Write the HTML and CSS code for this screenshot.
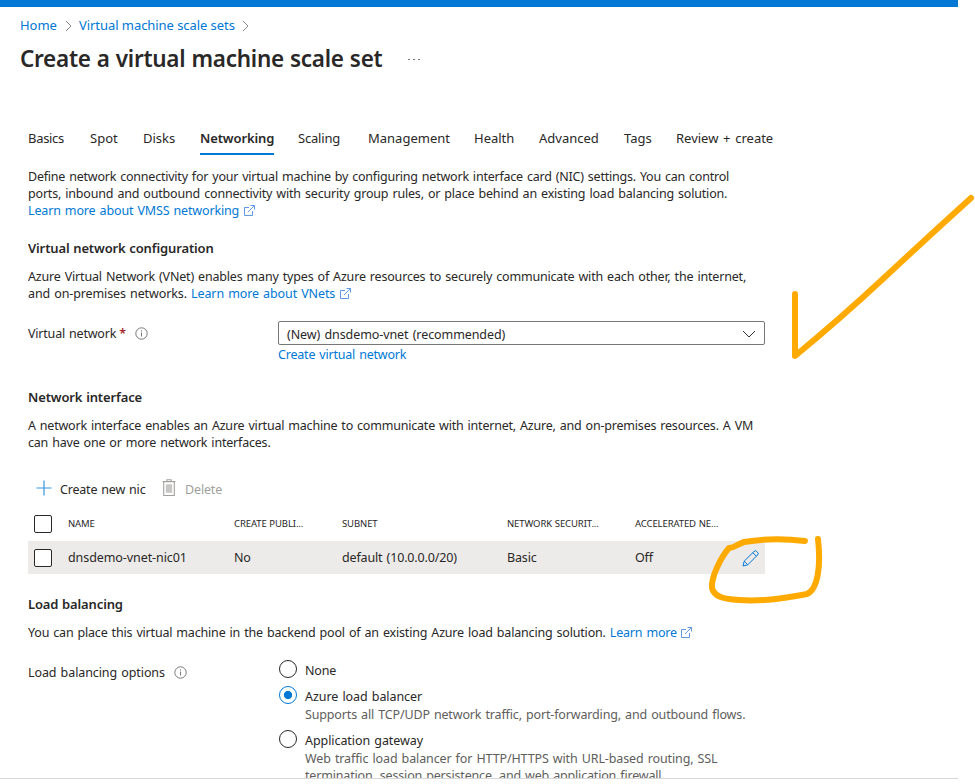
FILE: index.html
```
<!DOCTYPE html>
<html lang="en">
<head>
<meta charset="utf-8">
<title>Create a virtual machine scale set</title>
<link rel="stylesheet" href="styles.css">
</head>
<body>
<svg class="defs" width="0" height="0" aria-hidden="true">
  <symbol id="ext" viewBox="0 0 11 11"><path d="M5 2.500H.500v8h8V6M6.500.500H10.500V4.500M10.300.700 4 7"/></symbol>
  <symbol id="info" viewBox="0 0 13 13"><circle cx="6.500" cy="6.500" r="5.700"/><path d="M6.500 5.500V9.500M6.500 3.300V4.500"/></symbol>
  <symbol id="chev" viewBox="0 0 7 12"><path d="M1 1 6 6 1 11"/></symbol>
</svg>
<div class="page">
  <div class="topbar"></div>
  <nav class="crumbs">
    <a class="c1">Home</a><svg class="chev"><use href="#chev"/></svg><a class="c2">Virtual machine scale sets</a><svg class="chev"><use href="#chev"/></svg>
  </nav>
  <header class="title"><h1>Create a virtual machine scale set</h1><span class="dots"><i></i><i></i><i></i></span></header>
  <nav class="tabs">
    <a class="t1">Basics</a><a class="t2">Spot</a><a class="t3">Disks</a><a class="t4 active">Networking</a><a class="t5">Scaling</a><a class="t6">Management</a><a class="t7">Health</a><a class="t8">Advanced</a><a class="t9">Tags</a><a class="t10">Review + create</a>
  </nav>
  <main>
    <div class="para">
      <div class="l1">Define network connectivity for your virtual machine by configuring network interface card (NIC) settings. You can control</div>
      <div class="l2">ports, inbound and outbound connectivity with security group rules, or place behind an existing load balancing solution.</div>
      <div class="l3"><a>Learn more about VMSS networking</a><svg class="ext"><use href="#ext"/></svg></div>
    </div>
    <h2 class="h-vnet">Virtual network configuration</h2>
    <div class="para">
      <div class="l4">Azure Virtual Network (VNet) enables many types of Azure resources to securely communicate with each other, the internet,</div>
      <div class="l5">and on-premises networks. <a>Learn more about VNets</a><svg class="ext"><use href="#ext"/></svg></div>
    </div>
    <div class="field">
      <div class="label"><span class="lab1">Virtual network</span><b class="req">*</b><svg class="info"><use href="#info"/></svg></div>
      <div class="control">
        <div class="select"><span class="sel">(New) dnsdemo-vnet (recommended)</span><svg class="down" viewBox="0 0 14 8"><path d="M1 1 7 7 13 1"/></svg></div>
        <a class="create">Create virtual network</a>
      </div>
    </div>
    <h2 class="h-nic">Network interface</h2>
    <div class="para">
      <div class="l6">A network interface enables an Azure virtual machine to communicate with internet, Azure, and on-premises resources. A VM</div>
      <div class="l7">can have one or more network interfaces.</div>
    </div>
    <div class="toolbar">
      <svg class="plus" viewBox="0 0 16 16"><path d="M8 .5V15.500M.5 8H15.500"/></svg><span class="b1">Create new nic</span>
      <svg class="trash" viewBox="0 0 13 17"><path class="fill" d="M3.500 5h6v8h-6z"/><path d="M.5 2.500h12M4.500 2V.700h4V2M1.500 2.500v13h10v-13"/></svg><span class="b2">Delete</span>
    </div>
    <div class="row head"><i class="box"></i><span class="g1">NAME</span><span class="g2">CREATE PUBLI...</span><span class="g3">SUBNET</span><span class="g4">NETWORK SECURIT...</span><span class="g5">ACCELERATED NE...</span></div>
    <div class="row data"><i class="box"></i><span class="d1">dnsdemo-vnet-nic01</span><span class="d2">No</span><span class="d3">default (10.0.0.0/20)</span><span class="d4">Basic</span><span class="d5">Off</span><svg class="pencil" viewBox="0 0 17 17"><path d="M1 16 2.200 11.200 12 1.500a1.900 1.900 0 0 1 2.800 0l.7.700a1.900 1.900 0 0 1 0 2.800L5.800 14.800ZM2.200 11.200 5.800 14.800M10.800 2.700 14.300 6.200"/></svg></div>
    <h2 class="h-lb">Load balancing</h2>
    <div class="para"><div class="l8">You can place this virtual machine in the backend pool of an existing Azure load balancing solution. <a>Learn more</a><svg class="ext"><use href="#ext"/></svg></div></div>
    <div class="options">
      <div class="label"><span class="lab2">Load balancing options</span><svg class="info"><use href="#info"/></svg></div>
      <div class="radios">
        <div class="opt o1"><i class="radio"></i><div><div class="r1">None</div></div></div>
        <div class="opt o2"><i class="radio on"></i><div><div class="r2">Azure load balancer</div><div class="desc s1">Supports all TCP/UDP network traffic, port-forwarding, and outbound flows.</div></div></div>
        <div class="opt o3"><i class="radio"></i><div><div class="r3">Application gateway</div><div class="desc s2">Web traffic load balancer for HTTP/HTTPS with URL-based routing, SSL</div><div class="desc s3">termination, session persistence, and web application firewall.</div></div></div>
      </div>
    </div>
  </main>
  <div class="rule"></div>
  <svg class="ink" viewBox="0 0 975 784"><path d="M795 294V356Q841 318 885 277T971 198"/><path d="M805 541Q773 537 744 542C737 544 735 548 729 548C721 557 711 577 712 588C714 597 724 599 739 600C765 602 790 597 807 594C818 589 821 566 818 539"/></svg>
</div>
</body>
</html>
```
FILE: styles.css
```
* { box-sizing: border-box; }
body { margin: 0; background: #fff; color: #292827; font: 13px/17px "Noto Sans", "Open Sans", sans-serif; }
.defs { position: absolute; }
.page { position: relative; width: 975px; height: 784px; overflow: hidden; white-space: nowrap; }
svg { fill: none; flex: none; }
a { color: #0078d4; }
.topbar { width: 958px; height: 7px; background: #0078d4; }
.crumbs { display: flex; align-items: center; height: 18px; margin: 9px 0 0 20px; letter-spacing: -.06px; }
.c1 { width: 45px; }
.c2 { width: 163px; }
.chev { width: 7px; height: 12px; margin: 2px 7px 0 0; stroke: #8a8886; }
.title { display: flex; align-items: center; height: 32px; margin: 9px 0 0 20px; }
h1 { margin: 0; width: 388px; font-size: 22.5px; line-height: 32px; font-weight: 600; letter-spacing: -.28px; word-spacing: .6px; }
.dots { display: flex; gap: 3px; }
.dots i { width: 2px; height: 1px; background: #797775; }
.tabs { display: flex; height: 28px; margin: 52px 0 0 28px; }
.tabs a { color: #292827; line-height: 22px; }
.tabs .t1 { width: 62px; letter-spacing: -.3px; } .t2 { width: 53px; } .t3 { width: 57px; }
.tabs .t4 { width: 74px; margin-right: 24px; font-weight: 600; letter-spacing: -.12px; border-bottom: 2px solid #0078d4; }
.t5 { width: 70px; letter-spacing: -.2px; } .t6 { width: 106px; } .t7 { width: 65px; } .t8 { width: 85px; } .t9 { width: 52px; }
.t10 { word-spacing: 1.3px; }
main { height: 623px; margin-left: 28px; width: 737px; padding-top: 13px; overflow: hidden; font-size: 12.5px; letter-spacing: -.15px; word-spacing: 1px; }
.l1 { letter-spacing: -.22px; }
.l2 { letter-spacing: -.18px; }
.l4 { letter-spacing: -.18px; }
.l5 { letter-spacing: -.11px; }
.l6 { letter-spacing: -.205px; }
.l7 { letter-spacing: -.2px; }
.l8 { letter-spacing: -.185px; }
.s2 { letter-spacing: -.12px; }
.s3 { letter-spacing: -.17px; }
.create { letter-spacing: -.2px; }
.sel, .d1 { letter-spacing: -.08px; }
.lab1 { letter-spacing: -.2px; }
.lab2 { letter-spacing: -.09px; }
.r2, .r3 { letter-spacing: -.07px; }
.ext { width: 11px; height: 11px; margin-left: 5px; vertical-align: -1px; stroke: #4f8fe0; stroke-width: .9; }
.l8 .ext { margin-left: 4px; }
h2 { margin: 0; font-size: 13px; line-height: 17px; font-weight: 600; letter-spacing: -.13px; word-spacing: .5px; }
.h-vnet { margin: 21px 0 11px; }
.field { display: flex; height: 43px; margin-top: 19px; }
.label { display: flex; align-items: center; width: 250px; height: 25px; }
.req { color: #a4262c; margin-left: 3px; font-weight: 600; }
.info { width: 13px; height: 13px; margin-left: 9px; stroke: #797775; }
.control { width: 487px; }
.select { display: flex; align-items: center; justify-content: space-between; height: 24px; padding: 2px 8px 0 8px; border: 1px solid #797775; border-radius: 2px; }
.down { width: 14px; height: 8px; margin-top: -1px; stroke: #323130; }
.create { display: block; margin-top: 1px; }
.h-nic { margin: 25px 0 11px; }
.toolbar { display: flex; align-items: center; height: 20px; margin: 28px 0 8px 8px; }
.plus { width: 16px; height: 16px; margin: -2px 8px 0 0; stroke: #3a96dd; stroke-width: 1.2; }
.b1 { width: 102px; letter-spacing: -.2px; }
.trash { width: 14px; height: 18px; margin: -2px 9px 0 0; stroke: #a19f9d; }
.trash .fill { fill: #c8c6c4; stroke: none; }
.b2 { color: #a19f9d; }
.row { display: grid; grid-template-columns: 34px 166px 108px 165px 128px 107px 17px; align-items: center; padding-left: 6px; height: 33px; }
.head { height: 34px; font-size: 9.5px; letter-spacing: -.1px; word-spacing: .4px; }
.head span { padding-bottom: 1px; }
.data { background: #edebe9; }
.box { width: 18px; height: 18px; border: 1px solid #292827; border-radius: 2px; background: #fff; }
.pencil { width: 17px; height: 17px; margin-top: 1px; stroke: #0078d4; }
.h-lb { margin: 22px 0 11px; }
.options { display: flex; margin-top: 17px; }
.options .label { height: 29px; }
.opt { display: flex; gap: 8px; margin-left: 1px; }
.o1 { height: 26px; } .o2 { height: 44px; }
.opt > div { padding-top: 4px; }
.radio { flex: none; width: 18px; height: 18px; margin-top: 2px; border: 1px solid #292827; border-radius: 50%; }
.on { border-color: #0078d4; background: radial-gradient(circle, #0078d4 0 3.7px, #fff 4.5px); }
.desc { color: #605e5c; }
.r2, .r3 { margin-bottom: 1px; }
.rule { width: 958px; height: 1px; background: #d8d6d4; }
.ink { position: absolute; left: 0; top: 0; width: 975px; height: 784px; stroke: #ffaa00; stroke-width: 6; stroke-linecap: round; stroke-linejoin: round; pointer-events: none; }
```
